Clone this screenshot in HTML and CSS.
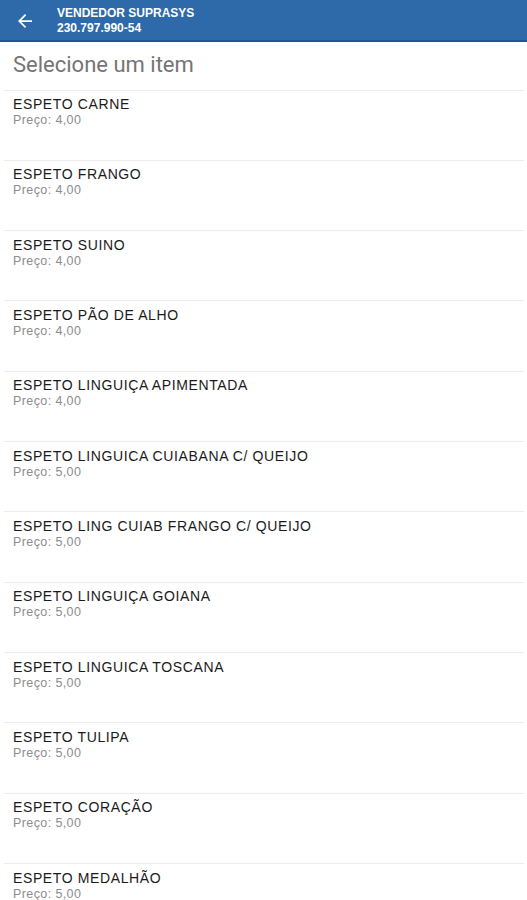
FILE: index.html
```html
<!DOCTYPE html>
<html>
<head>
<meta charset="utf-8">
<link rel="stylesheet" href="styles.css">
</head>
<body>
<header class="appbar">
  <svg class="back" width="14" height="14" viewBox="4 4 16 16"><path d="M20 11H7.83l5.59-5.59L12 4l-8 8 8 8 1.41-1.41L7.83 13H20v-2z" fill="#fff"/></svg>
  <div class="titles">
    <div class="t1">VENDEDOR SUPRASYS</div>
    <div class="t2">230.797.990-54</div>
  </div>
</header>
<div class="heading">Selecione um item</div>
<ul class="list">
  <li class="item"><div class="name">ESPETO CARNE</div><div class="price">Preço: 4,00</div></li>
  <li class="item"><div class="name">ESPETO FRANGO</div><div class="price">Preço: 4,00</div></li>
  <li class="item"><div class="name">ESPETO SUINO</div><div class="price">Preço: 4,00</div></li>
  <li class="item"><div class="name">ESPETO PÃO DE ALHO</div><div class="price">Preço: 4,00</div></li>
  <li class="item"><div class="name">ESPETO LINGUIÇA APIMENTADA</div><div class="price">Preço: 4,00</div></li>
  <li class="item"><div class="name">ESPETO LINGUICA CUIABANA C/ QUEIJO</div><div class="price">Preço: 5,00</div></li>
  <li class="item"><div class="name">ESPETO LING CUIAB FRANGO C/ QUEIJO</div><div class="price">Preço: 5,00</div></li>
  <li class="item"><div class="name">ESPETO LINGUIÇA GOIANA</div><div class="price">Preço: 5,00</div></li>
  <li class="item"><div class="name">ESPETO LINGUICA TOSCANA</div><div class="price">Preço: 5,00</div></li>
  <li class="item"><div class="name">ESPETO TULIPA</div><div class="price">Preço: 5,00</div></li>
  <li class="item"><div class="name">ESPETO CORAÇÃO</div><div class="price">Preço: 5,00</div></li>
  <li class="item"><div class="name">ESPETO MEDALHÃO</div><div class="price">Preço: 5,00</div></li>
</ul>
</body>
</html>
```
FILE: styles.css
```css
html, body {
  margin: 0;
  padding: 0;
  background: #fff;
  font-family: "Liberation Sans", Arial, sans-serif;
  height: 900px;
  overflow: hidden;
}
.appbar {
  height: 40px;
  background: #2e6aa9;
  border-bottom: 2px solid #1d5694;
  display: flex;
  align-items: center;
  color: #fff;
}
.back {
  margin-left: 18px;
  margin-right: 25px;
  margin-top: 2px;
}
.titles {
  display: flex;
  flex-direction: column;
  line-height: 15px;
  font-size: 12px;
  font-weight: bold;
  margin-top: 1px;
}
.heading {
  height: 47.5px;
  line-height: 45px;
  font-family: Roboto, "Liberation Sans", sans-serif;
  font-size: 22px;
  color: #757575;
  border-bottom: 1px solid #ececec;
  margin: 0 3px 0 4px;
  padding-left: 9px;
}
.list {
  list-style: none;
  margin: 0;
  padding: 0;
}
.item {
  height: 70.33px;
  box-sizing: border-box;
  border-bottom: 1px solid #ececec;
  margin: 0 3px 0 4px;
  padding: 4.5px 0 0 9px;
}
.name {
  font-size: 14px;
  color: #1a1a1a;
  line-height: 18px;
  letter-spacing: 0.62px;
}
.price {
  font-size: 12.5px;
  color: #8c8c8c;
  line-height: 14px;
  letter-spacing: 0.4px;
}
```
